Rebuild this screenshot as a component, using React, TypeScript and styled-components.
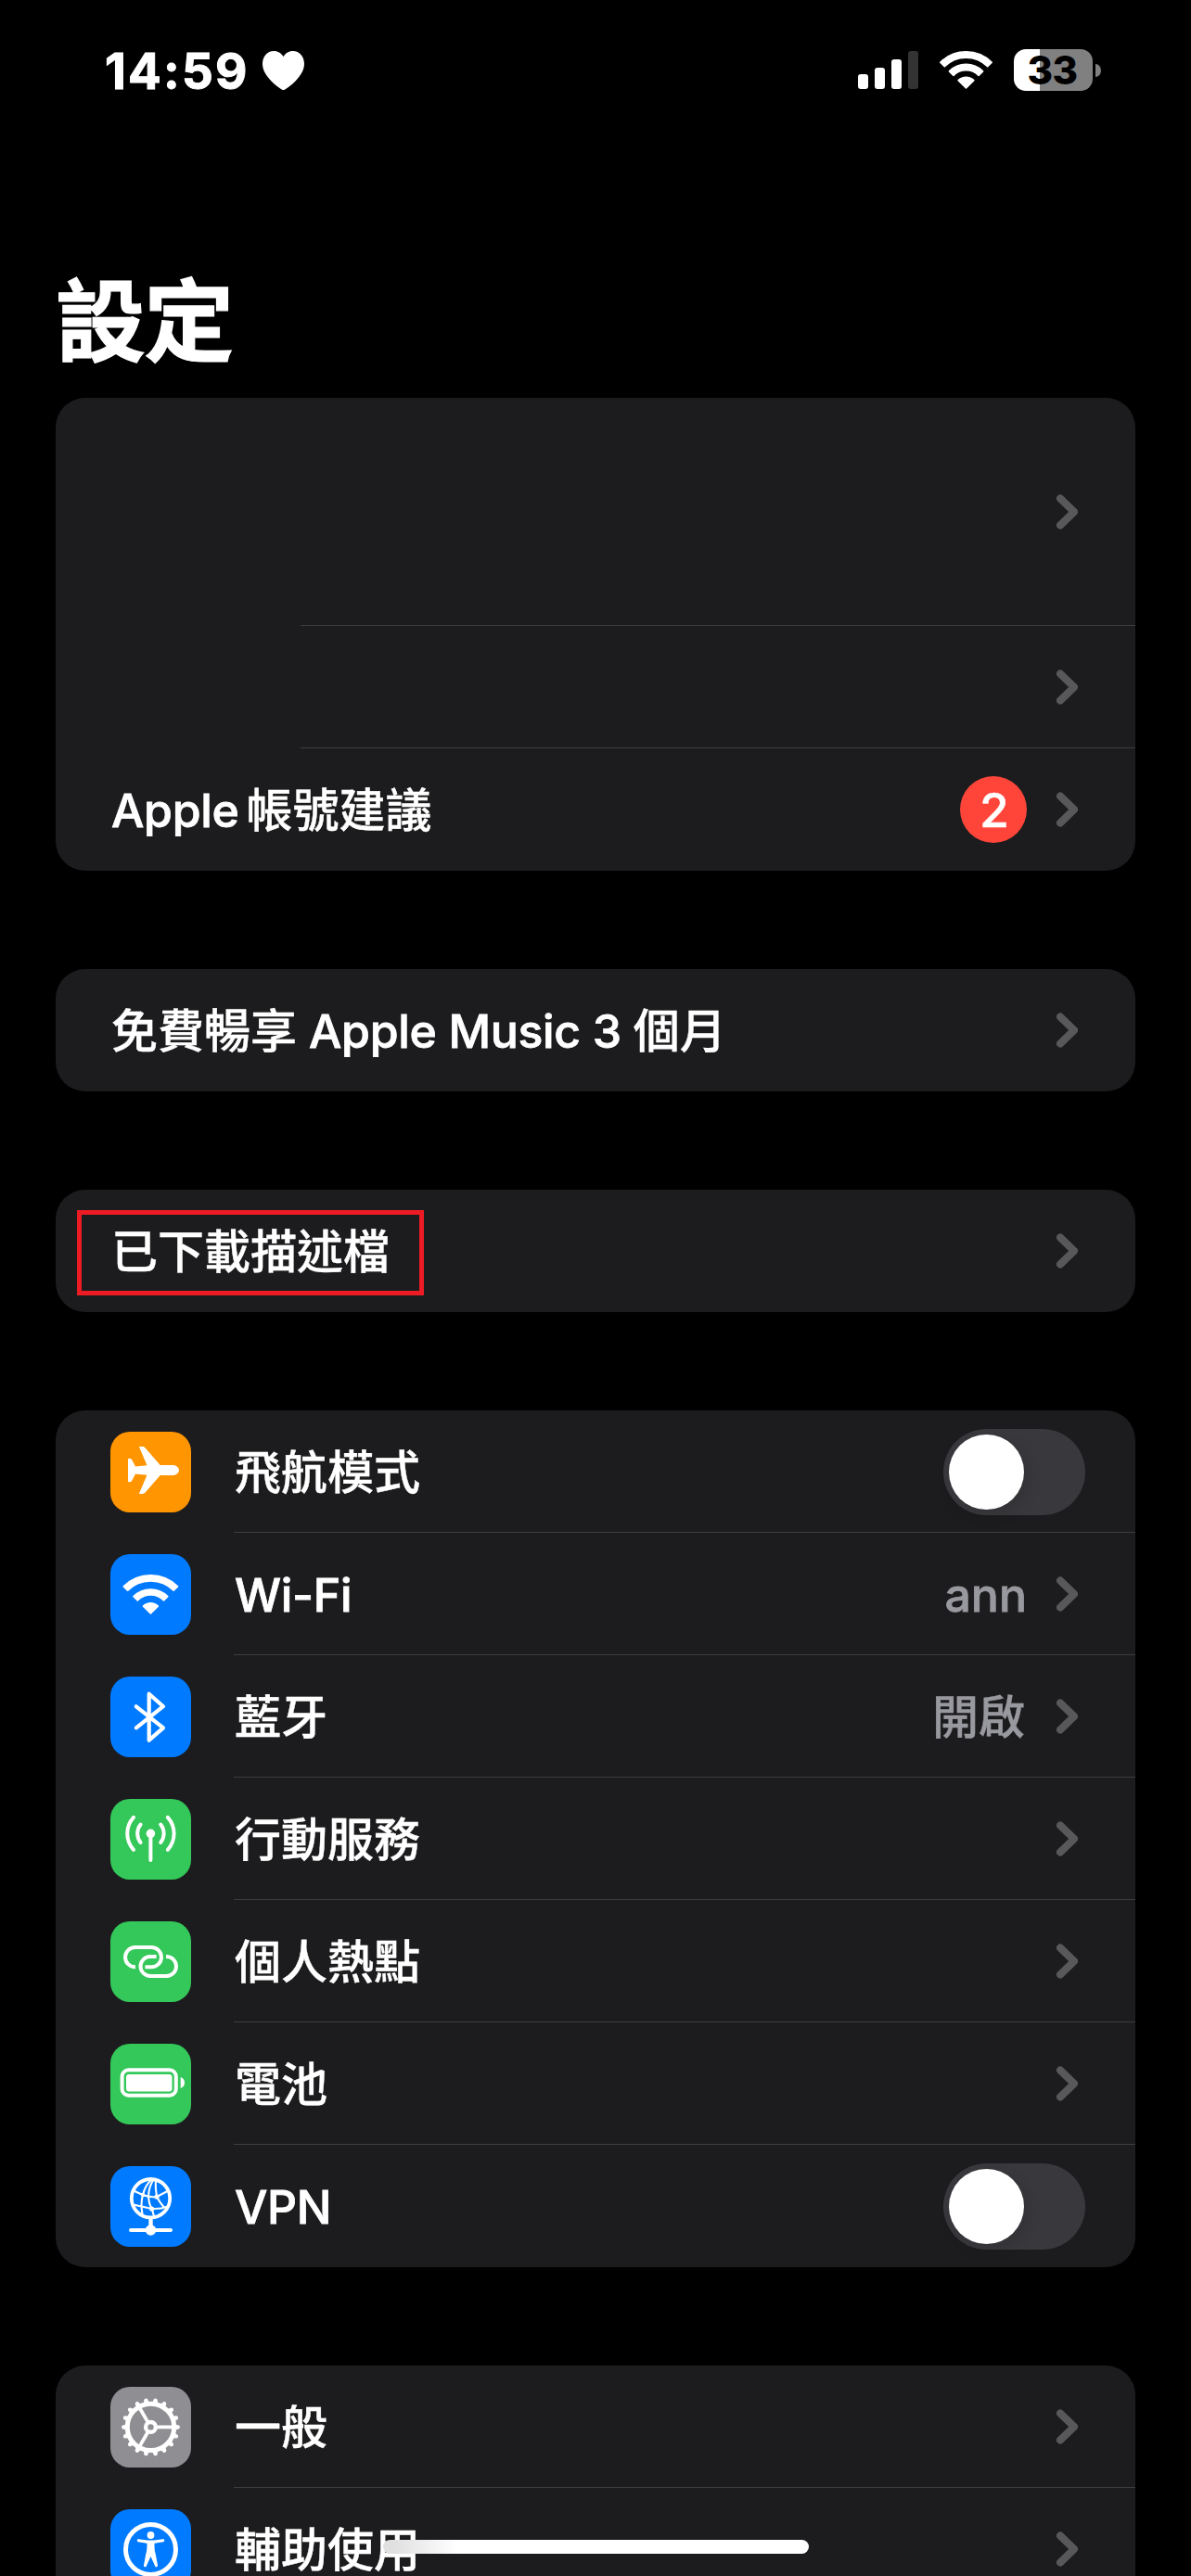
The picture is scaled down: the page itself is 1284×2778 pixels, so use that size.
import React from "react";
import styled, { createGlobalStyle } from "styled-components";

const GlobalStyle = createGlobalStyle`
  html, body { margin: 0; padding: 0; background: #000; }
  body { overflow: hidden; }
  * { box-sizing: border-box; }
`;

const Screen = styled.main`
  position: relative;
  display: flex;
  flex-direction: column;
  width: 1284px;
  height: 2778px;
  overflow: hidden;
  background: #000;
  color: #fff;
  font-family: Inter, "Noto Sans CJK TC", sans-serif;
`;

const StatusBar = styled.header`
  display: flex;
  align-items: center;
  justify-content: space-between;
  height: 152px;
  padding: 0 97px 0 113px;
  flex: none;
`;

const StatusSide = styled.div<{ $gap: number }>`
  display: flex;
  align-items: center;
  gap: ${(p) => p.$gap}px;
`;

const Clock = styled.time`
  width: 156px;
  padding-top: 2px;
  font-size: 53px;
  font-weight: 700;
  line-height: 60px;
  letter-spacing: 2.2px;
  white-space: nowrap;
  -webkit-text-stroke: 1px #fff;
`;

const BatteryShell = styled.div`
  display: flex;
  align-items: center;
  gap: 3px;
  margin-top: -1px;
`;

const BatteryBody = styled.div`
  display: flex;
  align-items: center;
  justify-content: center;
  width: 85px;
  height: 45px;
  padding-right: 2px;
  border-radius: 13px;
  background: linear-gradient(to right, #fff 28px, #808080 28px);
  color: #000;
  font-size: 42px;
  font-weight: 800;
  line-height: 45px;
  letter-spacing: -0.5px;
`;

const BatteryCap = styled.div`
  width: 6px;
  height: 14px;
  border-radius: 0 6px 6px 0 / 0 7px 7px 0;
  background: #808080;
`;

const Title = styled.h1`
  margin: 0;
  height: 277px;
  padding: 125px 0 0 60px;
  flex: none;
  font-size: 97px;
  font-weight: 700;
  line-height: 140px;
  letter-spacing: -1.8px;
  -webkit-text-stroke: 1.2px #fff;
`;

const Groups = styled.div`
  display: flex;
  flex-direction: column;
  gap: 106px;
  padding: 0 60px;
  flex: none;
`;

const Group = styled.section`
  display: flex;
  flex-direction: column;
  border-radius: 32px;
  background: #1c1c1e;
`;

const Row = styled.div<{ $height?: number }>`
  display: flex;
  height: ${(p) => p.$height ?? 132}px;
  padding-left: 59px;
`;

const RowIcon = styled.div`
  display: flex;
  align-items: flex-start;
  width: 133px;
  padding-top: 23px;
  flex: none;
`;

const Tile = styled.div<{ $color: string }>`
  width: 87px;
  height: 87px;
  border-radius: 21px;
  background: ${(p) => p.$color};
`;

const RowBody = styled.div<{ $indent?: number; $line?: boolean }>`
  display: flex;
  align-items: center;
  flex: 1;
  margin-left: ${(p) => p.$indent ?? 0}px;
  border-bottom: 1px solid ${(p) => (p.$line ? "#3d3d41" : "transparent")};
`;

const Label = styled.span`
  flex: 1;
  padding: 3px 0 0 1px;
  font-size: 50px;
  font-weight: 500;
  line-height: 50px;
  white-space: nowrap;
  -webkit-text-stroke: 0.4px currentColor;
`;

const Latin = styled.span<{ $after?: number }>`
  margin-right: ${(p) => p.$after ?? 0}px;
  letter-spacing: -0.35px;
  -webkit-text-stroke: 0.8px currentColor;
`;

const Value = styled.span<{ $cjk?: boolean }>`
  padding-top: 3px;
  margin-right: ${(p) => (p.$cjk ? 34 : 32)}px;
  color: #98989f;
  font-size: 50px;
  font-weight: 500;
  line-height: 50px;
  -webkit-text-stroke: ${(p) => (p.$cjk ? 0.4 : 0.8)}px currentColor;
`;

const Badge = styled.span`
  display: flex;
  align-items: center;
  justify-content: center;
  width: 72px;
  height: 72px;
  margin: 1px 32px 0 0;
  padding-left: 2px;
  border-radius: 50%;
  background: #ff453a;
  font-size: 51px;
  font-weight: 500;
  -webkit-text-stroke: 0.6px currentColor;
`;

const Switch = styled.span`
  display: flex;
  width: 153px;
  height: 93px;
  margin: 2px 54px 0 0;
  padding: 6px;
  border-radius: 47px;
  background: #39393d;
`;

const Knob = styled.span`
  width: 81px;
  height: 81px;
  border-radius: 50%;
  background: #fff;
  box-shadow: 4px 6px 16px rgba(0, 0, 0, 0.12);
`;

const ChevronSvg = styled.svg`
  width: 23px;
  height: 38px;
  margin: 1px 62px 0 0;
  flex: none;
`;

const Highlight = styled.div`
  position: absolute;
  left: 83px;
  top: 1305px;
  width: 374px;
  height: 92px;
  border: 5px solid #ed1c24;
`;

const HomeIndicator = styled.div`
  position: absolute;
  left: 413px;
  top: 2739px;
  width: 459px;
  height: 15px;
  border-radius: 8px;
  background: linear-gradient(to right, #e0e0e0 12px, #fff 80px);
`;

const Chevron = () => (
  <ChevronSvg viewBox="0 0 23 38" fill="none">
    <path d="M4 4.5 L19 19 L4 33.5" stroke="#58585b" strokeWidth="8" strokeLinecap="round" strokeLinejoin="round" />
  </ChevronSvg>
);

const band = (cx: number, cy: number, outer: number, inner: number) => {
  const s = Math.SQRT1_2;
  const ox = outer * s;
  const ix = inner * s;
  return (
    `M${cx - ox} ${cy - ox} A${outer} ${outer} 0 0 1 ${cx + ox} ${cy - ox} L${cx + ix} ${cy - ix} ` +
    (inner > 0 ? `A${inner} ${inner} 0 0 0 ${cx - ix} ${cy - ix} ` : "") +
    "Z"
  );
};

const SignalIcon = () => (
  <svg width="65" height="42" viewBox="0 0 65 42">
    <rect x="0" y="25" width="11" height="16" rx="3" fill="#fff" />
    <rect x="18" y="18" width="11" height="23" rx="3" fill="#fff" />
    <rect x="36" y="9" width="11" height="32" rx="3" fill="#fff" />
    <rect x="54" y="0" width="11" height="41" rx="3" fill="#333" />
  </svg>
);

const StatusWifi = () => (
  <svg width="57" height="42" viewBox="0.5 0 57 42">
    <g fill="#fff" stroke="#fff" strokeWidth="1.6" strokeLinejoin="round">
      <path d={band(29, 40, 39.2, 32.8)} />
      <path d={band(29, 40, 25.6, 19.2)} />
      <path d={band(29, 40, 11.8, 0)} />
    </g>
  </svg>
);

const Heart = () => (
  <svg width="45" height="42" viewBox="0 0 45 42">
    <path
      fill="#fff"
      d="M22.5 42 C20.8 42 14 37 9.5 32.4 C4 26.8 0 20.8 0 13.8 C0 5.8 5.2 0 12.2 0 C16.7 0 20.4 2.4 22.5 6.2 C24.6 2.4 28.3 0 32.8 0 C39.8 0 45 5.8 45 13.8 C45 20.8 41 26.8 35.5 32.4 C31 37 24.2 42 22.5 42 Z"
    />
  </svg>
);

const Glyph = ({ children }: { children: React.ReactNode }) => (
  <svg width="87" height="87" viewBox="0 0 87 87" fill="none" stroke="#fff" strokeWidth="4" strokeLinecap="round" strokeLinejoin="round">
    {children}
  </svg>
);

const Airplane = () => (
  <Glyph>
    <path
      fill="#fff"
      stroke="none"
      d="M31 16.6 Q31 16 31.8 16 H34.8 Q36.4 16 37.6 17.4 L53.7 36 H67 C71 36 74 38.6 74 41.5 C74 44.4 71 47 67 47 H53.7 L37.6 65.6 Q36.4 67 34.8 67 H31.8 Q31 67 31 66.4 L39.5 46.8 L27 45.5 L23.4 52.4 Q22.4 54.3 20.5 54.3 H20 Q19 54.3 19 53.3 V29.7 Q19 28.7 20 28.7 H20.5 Q22.4 28.7 23.4 30.6 L27 37.5 L39.5 36.2 Z"
    />
  </Glyph>
);

const Wifi = () => (
  <Glyph>
    <g fill="#fff" strokeWidth="1.6">
      <path d={band(43.4, 64, 41.2, 35)} />
      <path d={band(43.4, 64, 26, 20)} />
      <path d={band(43.4, 64, 11.2, 0)} />
    </g>
  </Glyph>
);

const Bluetooth = () => (
  <Glyph>
    <path d="M27.8 32.3 L57 55.3 L41.7 68.7 V18.7 L57 32.2 L27.8 55.3" strokeWidth="4.2" />
  </Glyph>
);

const Cellular = () => (
  <Glyph>
    <circle cx="43.4" cy="37.3" r="4.8" fill="#fff" stroke="none" />
    <path d="M43.4 39 V66" />
    <path d="M32.6 27.6 A15.4 15.4 0 0 0 32.6 47 M54.2 27.6 A15.4 15.4 0 0 1 54.2 47" />
    <path d="M25 19.8 A26 26 0 0 0 25 54.8 M61.8 19.8 A26 26 0 0 1 61.8 54.8" />
  </Glyph>
);

const Hotspot = () => (
  <Glyph>
    <path strokeLinecap="butt" d="M27 49.3 H26.7 A10.65 10.65 0 0 1 26.7 28 H44.3 A10.65 10.65 0 0 1 44.3 49.3 H37.5" />
    <path strokeLinecap="butt" d="M49.6 38 H43 A10.5 10.5 0 0 0 43 59 H60.5 A10.5 10.5 0 0 0 60.5 38 H60" />
  </Glyph>
);

const Battery = () => (
  <Glyph>
    <rect x="12.6" y="28.3" width="58.2" height="27.4" rx="7" />
    <rect x="17" y="33" width="49.5" height="18.6" rx="3" fill="#fff" stroke="none" />
    <path d="M75.7 36 C78.5 37 80 39.3 80 42 C80 44.7 78.5 47 75.7 48 Z" fill="#fff" stroke="none" />
  </Glyph>
);

const Vpn = () => (
  <Glyph>
    <circle cx="43.5" cy="34.7" r="20.7" strokeWidth="3.8" />
    <g strokeWidth="2.1">
      <path d="M25 26.5 L35 31 Q42 34 50 33 L61.5 27" />
      <path d="M24.5 41.5 Q34 43.5 44.7 46 Q54 46.5 62 43.5" />
      <path d="M44.5 14.5 C39 19 36.5 25 35 31 C33 38 33 44 34.5 52" />
      <path d="M46.5 14.5 C40.5 24 39 36 44.7 46 L47 54" />
      <path d="M48.8 14.5 C48.5 22 49 28 50 33 Q53 39 57.5 44" />
    </g>
    <g fill="#fff" stroke="none">
      <circle cx="35" cy="31" r="2.2" />
      <circle cx="50" cy="33" r="2.6" />
      <circle cx="44.7" cy="46" r="2.6" />
    </g>
    <path d="M43.5 57 V66" strokeWidth="4.4" strokeLinecap="butt" />
    <path d="M22 69 H65" />
    <circle cx="43.5" cy="69" r="5.8" fill="#fff" stroke="none" />
  </Glyph>
);

const Gear = () => (
  <Glyph>
    <circle cx="43.5" cy="43.4" r="25.2" strokeWidth="5" />
    {Array.from({ length: 18 }, (_, i) => (
      <path key={i} d="M69.5 41 L73.6 42 Q75 43.4 73.6 44.8 L69.5 45.8 Z" fill="#fff" strokeWidth="1.2" transform={`rotate(${i * 20} 43.5 43.4)`} />
    ))}
    <circle cx="43.5" cy="43.4" r="5.4" strokeWidth="4.4" />
    {[0, 120, 240].map((a) => (
      <path key={a} d="M50.5 43.4 H68" strokeWidth="3.8" strokeLinecap="butt" transform={`rotate(${a} 43.5 43.4)`} />
    ))}
  </Glyph>
);

const Accessibility = () => (
  <Glyph>
    <circle cx="43.5" cy="43.4" r="27" strokeWidth="5" />
    <circle cx="43.5" cy="28" r="3.9" fill="#fff" stroke="none" />
    <path
      d="M30.2 33.8 L39.5 35.2 Q41 35.6 41 37.5 Q41 45 39.6 49 L37.4 60.8 L43.5 47.5 L49.6 60.8 L47.4 49 Q46 45 46 37.5 Q46 35.6 47.5 35.2 L56.8 33.8 L47 35 H40 Z"
      strokeWidth="2.9"
      fill="#fff"
    />
  </Glyph>
);

const BLUE = "#007aff";
const GREEN = "#34c759";

type Item = {
  label: string;
  color: string;
  icon: React.ReactNode;
  latin?: boolean;
  value?: string;
  valueCjk?: boolean;
  toggle?: boolean;
};

const network: Item[] = [
  { label: "飛航模式", color: "#ff9500", icon: <Airplane />, toggle: true },
  { label: "Wi-Fi", latin: true, color: BLUE, icon: <Wifi />, value: "ann" },
  { label: "藍牙", color: BLUE, icon: <Bluetooth />, value: "開啟", valueCjk: true },
  { label: "行動服務", color: GREEN, icon: <Cellular /> },
  { label: "個人熱點", color: GREEN, icon: <Hotspot /> },
  { label: "電池", color: GREEN, icon: <Battery /> },
  { label: "VPN", latin: true, color: BLUE, icon: <Vpn />, toggle: true },
];

const system: Item[] = [
  { label: "一般", color: "#8e8e93", icon: <Gear /> },
  { label: "輔助使用", color: BLUE, icon: <Accessibility /> },
];

const ItemGroup = ({ items }: { items: Item[] }) => (
  <Group>
    {items.map((item, i) => (
      <Row key={item.label}>
        <RowIcon>
          <Tile $color={item.color}>{item.icon}</Tile>
        </RowIcon>
        <RowBody $line={i < items.length - 1}>
          <Label>{item.latin ? <Latin>{item.label}</Latin> : item.label}</Label>
          {item.value && <Value $cjk={item.valueCjk}>{item.value}</Value>}
          {item.toggle ? (
            <Switch>
              <Knob />
            </Switch>
          ) : (
            <Chevron />
          )}
        </RowBody>
      </Row>
    ))}
  </Group>
);

export default function App() {
  return (
    <>
      <GlobalStyle />
      <Screen>
        <StatusBar>
          <StatusSide $gap={14}>
            <Clock>14:59</Clock>
            <Heart />
          </StatusSide>
          <StatusSide $gap={23}>
            <SignalIcon />
            <StatusWifi />
            <BatteryShell>
              <BatteryBody>33</BatteryBody>
              <BatteryCap />
            </BatteryShell>
          </StatusSide>
        </StatusBar>
        <Title>設定</Title>
        <Groups>
          <Group>
            <Row $height={246}>
              <RowBody $indent={205} $line>
                <Label />
                <Chevron />
              </RowBody>
            </Row>
            <Row>
              <RowBody $indent={205} $line>
                <Label />
                <Chevron />
              </RowBody>
            </Row>
            <Row>
              <RowBody>
                <Label>
                  <Latin $after={8}>Apple</Latin>帳號建議
                </Label>
                <Badge>2</Badge>
                <Chevron />
              </RowBody>
            </Row>
          </Group>
          <Group>
            <Row>
              <RowBody>
                <Label>
                  免費暢享<Latin> Apple Music 3 </Latin>個月
                </Label>
                <Chevron />
              </RowBody>
            </Row>
          </Group>
          <Group>
            <Row>
              <RowBody>
                <Label>已下載描述檔</Label>
                <Chevron />
              </RowBody>
            </Row>
          </Group>
          <ItemGroup items={network} />
          <ItemGroup items={system} />
        </Groups>
        <Highlight />
        <HomeIndicator />
      </Screen>
    </>
  );
}
